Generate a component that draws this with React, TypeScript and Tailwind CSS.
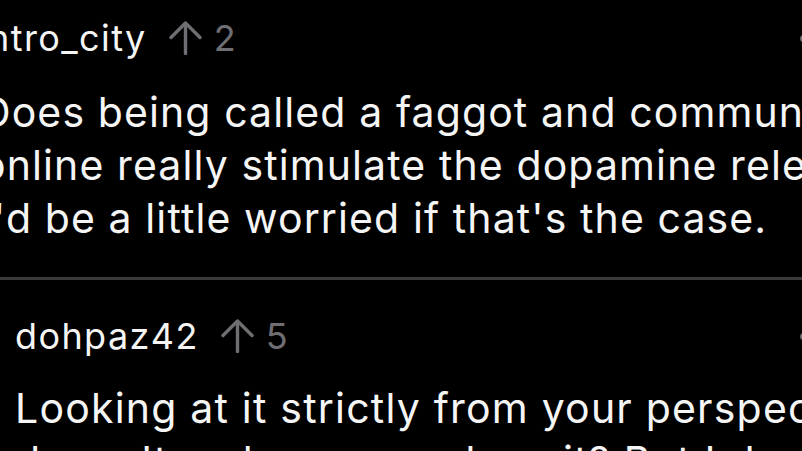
import React from "react";

function UpArrow() {
  return (
    <svg width="33" height="34" viewBox="0 0 33 34" fill="none" className="shrink-0">
      <path d="M16.5 32.5V2.5" stroke="#6f6f73" strokeWidth="3.4" strokeLinecap="round" />
      <path d="M2 16.5L16.5 2L31 16.5" stroke="#6f6f73" strokeWidth="3.4" strokeLinecap="round" strokeLinejoin="round" />
    </svg>
  );
}

function Dots() {
  return (
    <div className="ml-auto flex items-center gap-[5px]">
      <span className="block w-[7px] h-[7px] rounded-full bg-[#6f6f73]" />
      <span className="block w-[7px] h-[7px] rounded-full bg-[#6f6f73]" />
      <span className="block w-[7px] h-[7px] rounded-full bg-[#6f6f73]" />
    </div>
  );
}

function Header({ name, score, widthClass }: { name: string; score: number; widthClass: string }) {
  return (
    <div className={`flex items-center h-[40px] ${widthClass}`}>
      <span className="text-[36px] leading-[40px] text-[#f5f5f5] tracking-[1.4px]">{name}</span>
      <span className="ml-[22px] flex items-center">
        <UpArrow />
      </span>
      <span className="ml-[12px] text-[36px] leading-[40px] text-[#6f6f73] tracking-[1.3px]">{score}</span>
      <Dots />
    </div>
  );
}

export default function App() {
  return (
    <div
      className="w-[802px] h-[451px] overflow-hidden bg-black text-white"
      style={{ fontFamily: "Inter, 'Noto Sans', sans-serif" }}
    >
      <div className="pt-[18px]">
        <div className="ml-[-23px]">
          <Header name="Intro_city" score={2} widthClass="w-[854px]" />
        </div>
        <div className="ml-[-19px] mt-[28px] text-[41px] leading-[53px] text-[#f5f5f5] whitespace-nowrap tracking-[1.1px]">
          <div>Does being called a faggot and communicating</div>
          <div>online really stimulate the dopamine release?</div>
          <div>I'd be a little worried if that's the case.</div>
        </div>
      </div>
      <div className="mt-[32px] h-[3px] bg-[#3a3a3c]" />
      <div className="ml-[15px] pt-[36px]">
        <Header name="dohpaz42" score={5} widthClass="w-[816px]" />
        <div className="mt-[26px] text-[41px] leading-[53px] text-[#f5f5f5] whitespace-nowrap tracking-[1.2px]">
          <div>Looking at it strictly from your perspective, it</div>
          <div>doesn't make sense, does it? But I do see</div>
        </div>
      </div>
    </div>
  );
}
